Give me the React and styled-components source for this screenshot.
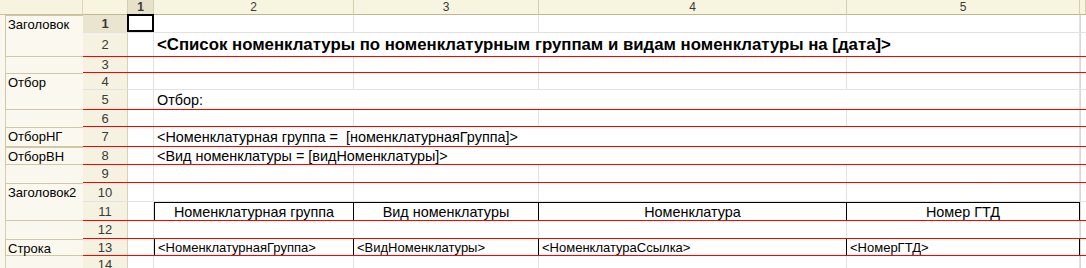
import styled, { createGlobalStyle } from "styled-components";

const GlobalStyle = createGlobalStyle`
  html, body {
    margin: 0;
    padding: 0;
    background: #fff;
  }
  body {
    font-family: "Liberation Sans", Arial, sans-serif;
    font-size: 13px;
    color: #000;
  }
`;

// колонки листа (после колонки с номерами строк)
const COLS = "45px 26px 200px 185px 308px 233px 6px";

const Wrap = styled.div`
  display: flex;
  width: 1086px;
  height: 268px;
  overflow: hidden;
`;

// левая панель с именами областей
const AreaPanel = styled.div`
  width: 83px;
  flex: none;
  display: flex;
  flex-direction: column;
  background: #faf8ee;
`;

const PanelCorner = styled.div`
  height: 15px;
  flex: none;
  box-sizing: border-box;
  background: #f6f3df;
  border-bottom: 1px solid #c9c19c;
  border-right: 1px solid #ddd6b8;
`;

const AreaGap = styled.div`
  height: ${(p) => p.$h}px;
  flex: none;
  margin-left: 5px;
  border-left: 1px solid #d6cfb2;
`;

const AreaBox = styled.div`
  height: ${(p) => p.$h}px;
  flex: none;
  box-sizing: border-box;
  margin-left: 5px;
  padding: 2px 0 0 2px;
  border: 1px solid #cfc7a6;
  border-right: none;
  background: #fbf9ef;
  line-height: 14px;
  white-space: nowrap;
`;

const Sheet = styled.div`
  flex: 1;
  display: flex;
  flex-direction: column;
`;

const HeadRow = styled.div`
  display: grid;
  grid-template-columns: ${COLS};
  height: 15px;
  flex: none;
`;

const HeadCell = styled.div`
  box-sizing: border-box;
  background: ${(p) => (p.$active ? "#e6e1c8" : "#f7f4e0")};
  border-bottom: 1px solid #bfb78f;
  border-right: 1px solid #d6cfae;
  text-align: center;
  font-size: 12px;
  line-height: 14px;
  font-weight: ${(p) => (p.$active ? "bold" : "normal")};
  color: #3a3a3a;
`;

const Row = styled.div`
  display: grid;
  grid-template-columns: ${COLS};
  height: ${(p) => p.$h}px;
  flex: none;
  box-sizing: border-box;
  border-bottom: 1px solid ${(p) => (p.$red ? "#ff0000" : "#e2e2e2")};
`;

const NumCell = styled.div`
  background: ${(p) => (p.$active ? "#e9e5cf" : "#f5f2e2")};
  border-right: 1px solid #d8d1b4;
  display: flex;
  align-items: center;
  justify-content: center;
  color: #3a3a3a;
  font-weight: ${(p) => (p.$active ? "bold" : "normal")};
`;

const Cell = styled.div`
  box-sizing: border-box;
  border-right: 1px solid ${(p) => (p.$frame ? "#000" : "#e2e2e2")};
  border-left: ${(p) => (p.$first ? "1px solid #000" : "none")};
  border-top: ${(p) => (p.$top ? "1px solid #000" : "none")};
  display: flex;
  align-items: center;
  justify-content: ${(p) => (p.$center ? "center" : "flex-start")};
  padding-left: ${(p) => (p.$center ? 0 : 3)}px;
  white-space: pre;
  font-size: ${(p) => p.$size || 13}px;
`;

// текст, который выходит за границы ячейки на пустые соседние
const SpanCell = styled(Cell)`
  grid-column: 3 / 7;
  font-weight: ${(p) => (p.$bold ? "bold" : "normal")};
`;

const Selected = styled.div`
  box-sizing: border-box;
  border: 2px solid #000;
  margin: -1px 0 0 -1px;
`;

const Edge = styled.div`
  border-left: 1px solid #d8d8d8;
`;

const rows = [
  { n: 1, h: 18 },
  { n: 2, h: 24, red: true, text: "<Список номенклатуры по номенклатурным группам и видам номенклатуры на [дата]>", bold: true, size: 16.8 },
  { n: 3, h: 16, red: true },
  { n: 4, h: 17 },
  { n: 5, h: 20, red: true, text: "Отбор:", size: 14.4 },
  { n: 6, h: 17, red: true },
  { n: 7, h: 20, red: true, text: "<Номенклатурная группа =  [номенклатурнаяГруппа]>", size: 14.4 },
  { n: 8, h: 18, red: true, text: "<Вид номенклатуры = [видНоменклатуры]>", size: 14.4 },
  { n: 9, h: 18, red: true },
  { n: 10, h: 19 },
  { n: 11, h: 19, red: true, table: ["Номенклатурная группа", "Вид номенклатуры", "Номенклатура", "Номер ГТД"], center: true, top: true, size: 14.4 },
  { n: 12, h: 18, red: true },
  { n: 13, h: 17, red: true, table: ["<НоменклатурнаяГруппа>", "<ВидНоменклатуры>", "<НоменклатураСсылка>", "<НомерГТД>"], size: 13 },
  { n: 14, h: 18 },
];

const areas = [
  { name: "Заголовок", h: 42 },
  { gap: 16 },
  { name: "Отбор", h: 37 },
  { gap: 17 },
  { name: "ОтборНГ", h: 20 },
  { name: "ОтборВН", h: 18 },
  { gap: 18 },
  { name: "Заголовок2", h: 38 },
  { gap: 18 },
  { name: "Строка", h: 17 },
  { gap: 20 },
];

const SheetRow = ({ r }) => {
  if (r.table) {
    return (
      <Row $h={r.h} $red={r.red}>
        <NumCell>{r.n}</NumCell>
        <Cell />
        {r.table.map((t, i) => (
          <Cell key={i} $frame $first={i === 0} $top={r.top} $center={r.center} $size={r.size}>
            {t}
          </Cell>
        ))}
        <Edge />
      </Row>
    );
  }
  return (
    <Row $h={r.h} $red={r.red}>
      <NumCell $active={r.n === 1}>{r.n}</NumCell>
      {r.n === 1 ? <Selected /> : <Cell />}
      {r.text ? (
        <SpanCell $bold={r.bold} $size={r.size}>
          {r.text}
        </SpanCell>
      ) : (
        <>
          <Cell />
          <Cell />
          <Cell />
          <Cell />
        </>
      )}
      <Edge />
    </Row>
  );
};

const App = () => {
  return (
    <>
      <GlobalStyle />
      <Wrap>
        <AreaPanel>
          <PanelCorner />
          {areas.map((a, i) =>
            a.gap ? (
              <AreaGap key={i} $h={a.gap} />
            ) : (
              <AreaBox key={i} $h={a.h}>
                {a.name}
              </AreaBox>
            )
          )}
        </AreaPanel>
        <Sheet>
          <HeadRow>
            <HeadCell />
            <HeadCell $active>1</HeadCell>
            <HeadCell>2</HeadCell>
            <HeadCell>3</HeadCell>
            <HeadCell>4</HeadCell>
            <HeadCell>5</HeadCell>
            <HeadCell />
          </HeadRow>
          {rows.map((r) => (
            <SheetRow key={r.n} r={r} />
          ))}
        </Sheet>
      </Wrap>
    </>
  );
};

export default App;
